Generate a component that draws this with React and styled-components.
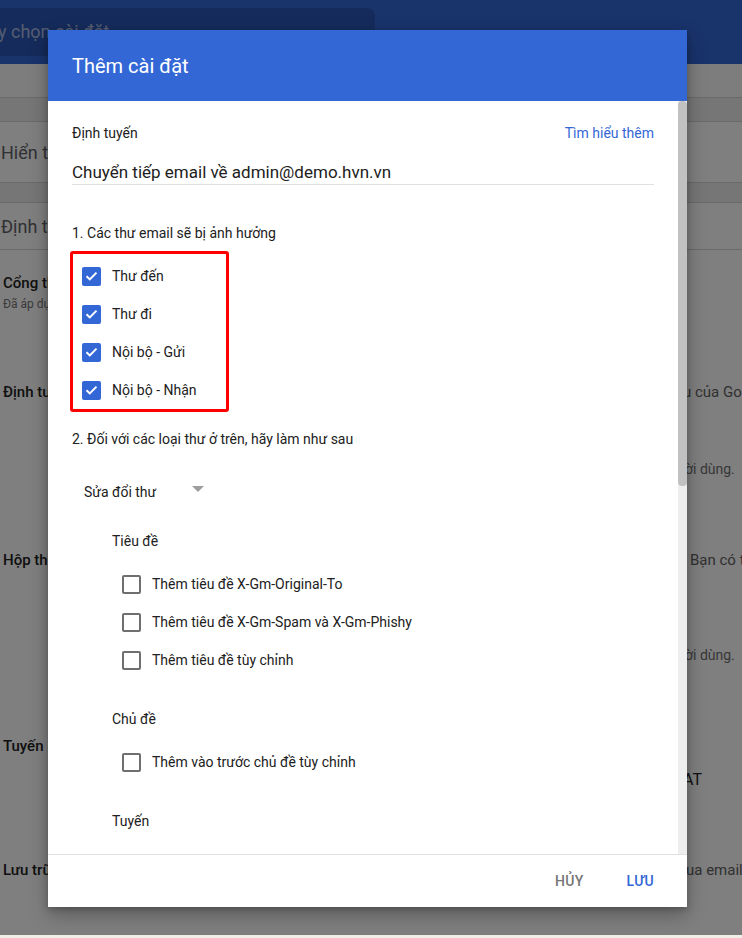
import React from "react";
import styled, { createGlobalStyle } from "styled-components";

const Global = createGlobalStyle`
  html, body { margin: 0; padding: 0; }
  body { font-family: Roboto, "Noto Sans", Arial, sans-serif; overflow: hidden; background: #fff; }
  *, *::before, *::after { box-sizing: border-box; }
`;

const Page = styled.div`
  position: relative;
  width: 742px;
  height: 938px;
  overflow: hidden;
  background: #fff;
`;

const TopBar = styled.div`
  height: 64px;
  background: #3367d6;
  padding-top: 8px;
`;

const SearchBox = styled.div`
  width: 375px;
  height: 48px;
  border-radius: 0 8px 8px 0;
  background: rgba(0, 0, 0, 0.15);
  color: rgba(255, 255, 255, 0.6);
  font-size: 18px;
  line-height: 48px;
  text-indent: -2px;
  white-space: nowrap;
  overflow: hidden;
`;

const Band = styled.div`
  height: ${(p) => p.$h}px;
  background: ${(p) => p.$bg};
  border-bottom: 1px solid #d4d4d4;
  display: flex;
  align-items: center;
  padding-left: 1px;
  font-size: 18px;
  color: #5f6368;
  white-space: nowrap;
`;

const SettingRow = styled.div`
  height: ${(p) => p.$h}px;
  display: grid;
  grid-template-columns: 680px 1fr;
  padding: 23px 0 0 3px;
  white-space: nowrap;
  overflow: hidden;
`;

const RowLabel = styled.div`
  display: flex;
  flex-direction: column;
`;

const LabelTitle = styled.div`
  font-size: 15px;
  line-height: 20px;
  font-weight: 500;
  color: #212121;
`;

const LabelSub = styled.div`
  font-size: 12px;
  line-height: 16px;
  margin-top: 3px;
  color: #757575;
`;

const Desc = styled.div`
  display: flex;
  flex-direction: column;
`;

const DescLine = styled.div`
  margin-top: ${(p) => p.$mt || 0}px;
  padding-left: ${(p) => p.$indent || 0}px;
  font-size: ${(p) => p.$size || 15}px;
  line-height: ${(p) => p.$lh || 20}px;
  color: ${(p) => p.$color || "#616161"};
`;

const Scrim = styled.div`
  position: absolute;
  left: 0;
  right: 0;
  top: 0;
  bottom: 3px;
  background: rgba(0, 0, 0, 0.5);
`;

const BottomStrip = styled.div`
  position: absolute;
  left: 0;
  right: 0;
  bottom: 0;
  height: 3px;
  background: #f1eee7;
`;

const Dialog = styled.div`
  position: absolute;
  left: 48px;
  top: 30px;
  width: 639px;
  height: 877px;
  background: #fff;
  display: flex;
  flex-direction: column;
  box-shadow: 0 8px 18px rgba(0, 0, 0, 0.28), 0 2px 6px rgba(0, 0, 0, 0.2);
`;

const DialogHeader = styled.div`
  height: 71px;
  flex: none;
  background: #3367d6;
  color: #fff;
  font-size: 20px;
  font-weight: 400;
  display: flex;
  align-items: center;
  padding-left: 24px;
`;

const DialogBody = styled.div`
  flex: 1;
  min-height: 0;
  display: flex;
`;

const BodyInner = styled.div`
  flex: 1;
  min-width: 0;
  overflow: hidden;
  padding: 22px 24px 40px 24px;
  display: flex;
  flex-direction: column;
  color: #212121;
`;

const ScrollTrack = styled.div`
  width: 9px;
  flex: none;
  background: #eeeeee;
  display: flex;
  flex-direction: column;
`;

const ScrollThumb = styled.div`
  height: 385px;
  background: #c1c1c1;
  border-radius: 4px;
`;

const TopRow = styled.div`
  display: flex;
  justify-content: space-between;
  font-size: 14px;
  line-height: 20px;
`;

const Link = styled.a`
  color: #3367d6;
  text-decoration: none;
`;

const InputLine = styled.div`
  margin-top: 17px;
  font-size: 17px;
  line-height: 24px;
  height: 25px;
  border-bottom: 1px solid #e0e0e0;
  color: #212121;
  white-space: nowrap;
`;

const SectionTitle = styled.div`
  margin-top: ${(p) => p.$mt}px;
  font-size: 14px;
  line-height: 20px;
  color: #212121;
`;

const Highlight = styled.div`
  margin-top: 8px;
  margin-left: -2px;
  width: 159px;
  border: 3px solid #ff0000;
  border-radius: 3px;
  padding: 3px 0 0 9px;
`;

const CheckRow = styled.label`
  height: 38px;
  flex: none;
  display: flex;
  align-items: center;
  gap: 11px;
  font-size: 14px;
  color: #212121;
  padding-left: ${(p) => p.$indent || 0}px;
  white-space: nowrap;
`;

const Box = styled.span`
  width: 19px;
  height: 19px;
  flex: none;
  border-radius: 2px;
  display: inline-flex;
  align-items: center;
  justify-content: center;
  background: ${(p) => (p.$checked ? "#3367d6" : "#fff")};
  border: ${(p) => (p.$checked ? "none" : "2px solid #6f6f6f")};
`;

const Select = styled.div`
  margin-top: 33px;
  margin-left: 12px;
  width: 120px;
  display: flex;
  justify-content: space-between;
  align-items: flex-start;
  font-size: 14px;
  line-height: 20px;
  color: #212121;
`;

const Caret = styled.span`
  margin-top: 4px;
  width: 0;
  height: 0;
  border-left: 6px solid transparent;
  border-right: 6px solid transparent;
  border-top: 6px solid #9e9e9e;
`;

const SubHeading = styled.div`
  margin-top: ${(p) => p.$mt}px;
  margin-left: 40px;
  font-size: 14px;
  line-height: 20px;
  color: #212121;
  flex: none;
`;

const CheckGroup = styled.div`
  margin-top: ${(p) => p.$mt}px;
  display: flex;
  flex-direction: column;
  flex: none;
`;

const DialogFooter = styled.div`
  height: 53px;
  flex: none;
  border-top: 1px solid #e0e0e0;
  display: flex;
  justify-content: flex-end;
  align-items: center;
  gap: 27px;
  padding-right: 25px;
`;

const Button = styled.button`
  background: none;
  border: none;
  padding: 6px 8px;
  font-family: inherit;
  font-size: 14px;
  font-weight: 500;
  letter-spacing: 0.3px;
  color: ${(p) => (p.$primary ? "#3367d6" : "#757575")};
  cursor: pointer;
`;

function Check({ checked }) {
  return (
    <Box $checked={checked}>
      {checked && (
        <svg width="13" height="10" viewBox="0 0 13 10">
          <path d="M1.5 5.2 L4.8 8.4 L11.5 1.6" fill="none" stroke="#fff" strokeWidth="2" />
        </svg>
      )}
    </Box>
  );
}

function CheckItem({ label, checked, indent }) {
  return (
    <CheckRow $indent={indent}>
      <Check checked={checked} />
      {label}
    </CheckRow>
  );
}

export default function App() {
  return (
    <>
      <Global />
      <Page>
        <TopBar>
          <SearchBox>y chọn cài đặt</SearchBox>
        </TopBar>
        <Band $h={34} $bg="#fafafa" />
        <Band $h={24} $bg="#ececec" />
        <Band $h={61} $bg="#ffffff">Hiển thị</Band>
        <Band $h={20} $bg="#ececec" />
        <Band $h={47} $bg="#ffffff">Định tuyến</Band>

        <SettingRow $h={109}>
          <RowLabel>
            <LabelTitle>Cổng thư đến</LabelTitle>
            <LabelSub>Đã áp dụng</LabelSub>
          </RowLabel>
          <Desc />
        </SettingRow>
        <SettingRow $h={168}>
          <RowLabel>
            <LabelTitle>Định tuyến</LabelTitle>
          </RowLabel>
          <Desc>
            <DescLine $indent={0}>u của Google</DescLine>
            <DescLine $mt={59} $size={14} $lh={16} $indent={2} $color="#707070">ời dùng.</DescLine>
          </Desc>
        </SettingRow>
        <SettingRow $h={186}>
          <RowLabel>
            <LabelTitle>Hộp thư</LabelTitle>
          </RowLabel>
          <Desc>
            <DescLine $indent={7}>Bạn có thể</DescLine>
            <DescLine $mt={77} $size={14} $lh={16} $indent={2} $color="#707070">ời dùng.</DescLine>
          </Desc>
        </SettingRow>
        <SettingRow $h={124}>
          <RowLabel>
            <LabelTitle>Tuyến</LabelTitle>
          </RowLabel>
          <Desc>
            <DescLine $mt={34} $size={16} $color="#212121">AT</DescLine>
          </Desc>
        </SettingRow>
        <SettingRow $h={100}>
          <RowLabel>
            <LabelTitle>Lưu trữ</LabelTitle>
          </RowLabel>
          <Desc>
            <DescLine $indent={3}>ua email</DescLine>
          </Desc>
        </SettingRow>

        <Scrim />
        <BottomStrip />

        <Dialog>
          <DialogHeader>Thêm cài đặt</DialogHeader>
          <DialogBody>
            <BodyInner>
              <TopRow>
                <span>Định tuyến</span>
                <Link href="#">Tìm hiểu thêm</Link>
              </TopRow>
              <InputLine>Chuyển tiếp email về admin@demo.hvn.vn</InputLine>

              <SectionTitle $mt={38}>1. Các thư email sẽ bị ảnh hưởng</SectionTitle>
              <Highlight>
                <CheckItem checked label="Thư đến" />
                <CheckItem checked label="Thư đi" />
                <CheckItem checked label="Nội bộ - Gửi" />
                <CheckItem checked label="Nội bộ - Nhận" />
              </Highlight>

              <SectionTitle $mt={17}>2. Đối với các loại thư ở trên, hãy làm như sau</SectionTitle>
              <Select>
                <span>Sửa đổi thư</span>
                <Caret />
              </Select>

              <SubHeading $mt={29}>Tiêu đề</SubHeading>
              <CheckGroup $mt={14}>
                <CheckItem indent={50} label="Thêm tiêu đề X-Gm-Original-To" />
                <CheckItem indent={50} label="Thêm tiêu đề X-Gm-Spam và X-Gm-Phishy" />
                <CheckItem indent={50} label="Thêm tiêu đề tùy chỉnh" />
              </CheckGroup>

              <SubHeading $mt={30}>Chủ đề</SubHeading>
              <CheckGroup $mt={14}>
                <CheckItem indent={50} label="Thêm vào trước chủ đề tùy chỉnh" />
              </CheckGroup>

              <SubHeading $mt={30}>Tuyến</SubHeading>
              <CheckGroup $mt={13}>
                <CheckItem indent={50} label="Thay đổi tuyến" />
                <CheckItem indent={50} label="Thay đổi người nhận phong bì" />
                <CheckItem indent={50} label="Thêm người nhận khác" />
              </CheckGroup>
            </BodyInner>
            <ScrollTrack>
              <ScrollThumb />
            </ScrollTrack>
          </DialogBody>
          <DialogFooter>
            <Button>HỦY</Button>
            <Button $primary>LƯU</Button>
          </DialogFooter>
        </Dialog>
      </Page>
    </>
  );
}
